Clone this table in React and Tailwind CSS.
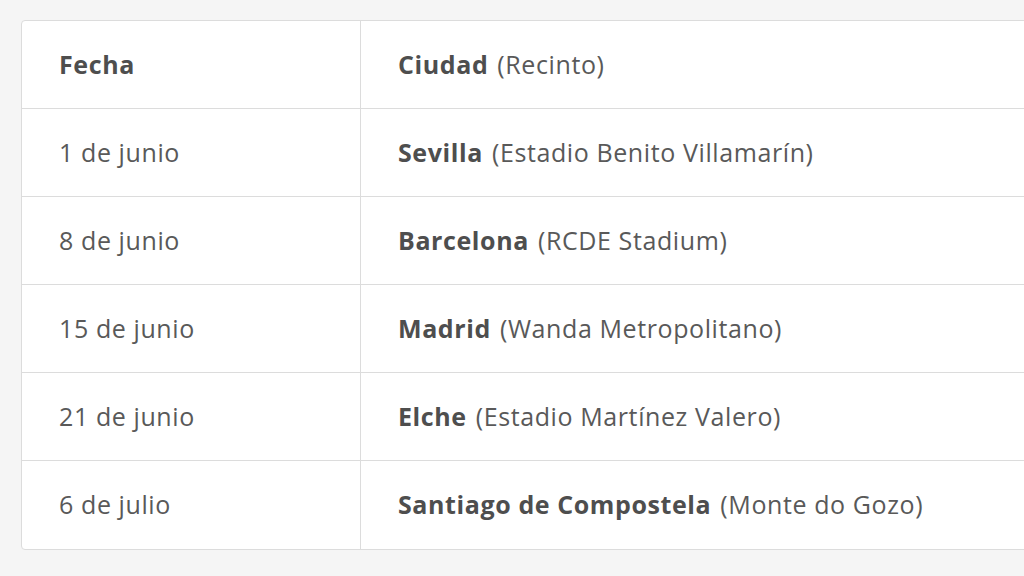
import React from 'react';

const rows = [
  { fecha: '1 de junio', ciudad: 'Sevilla', recinto: 'Estadio Benito Villamarín' },
  { fecha: '8 de junio', ciudad: 'Barcelona', recinto: 'RCDE Stadium' },
  { fecha: '15 de junio', ciudad: 'Madrid', recinto: 'Wanda Metropolitano' },
  { fecha: '21 de junio', ciudad: 'Elche', recinto: 'Estadio Martínez Valero' },
  { fecha: '6 de julio', ciudad: 'Santiago de Compostela', recinto: 'Monte do Gozo' },
];

const App = () => {
  return (
    <div
      className="w-[1024px] h-[576px] overflow-hidden bg-[#f5f5f5] pt-[20px] pl-[21px] text-[#595959] text-[25px] tracking-[0.6px]"
      style={{ fontFamily: '"Open Sans", "DejaVu Sans", sans-serif' }}
    >
      <div className="w-[1100px] bg-white border border-[#dcdcdc] rounded-[4px]">
        <div className="flex h-[88px] border-b border-[#dcdcdc]">
          <div className="w-[339px] shrink-0 border-r border-[#dcdcdc] pl-[37px] flex items-center font-bold text-[#4e4e4e]">
            Fecha
          </div>
          <div className="pl-[37px] flex items-center">
            <span className="font-bold text-[#4e4e4e]">Ciudad</span>
            <span className="ml-[9px]">(Recinto)</span>
          </div>
        </div>
        {rows.map((r, i) => (
          <div
            key={r.fecha}
            className={`flex h-[88px] ${i < rows.length - 1 ? 'border-b border-[#dcdcdc]' : ''}`}
          >
            <div className="w-[339px] shrink-0 border-r border-[#dcdcdc] pl-[37px] flex items-center">
              {r.fecha}
            </div>
            <div className="pl-[37px] flex items-center">
              <span className="font-bold text-[#4e4e4e]">{r.ciudad}</span>
              <span className="ml-[9px]">({r.recinto})</span>
            </div>
          </div>
        ))}
      </div>
    </div>
  );
};

export default App;
